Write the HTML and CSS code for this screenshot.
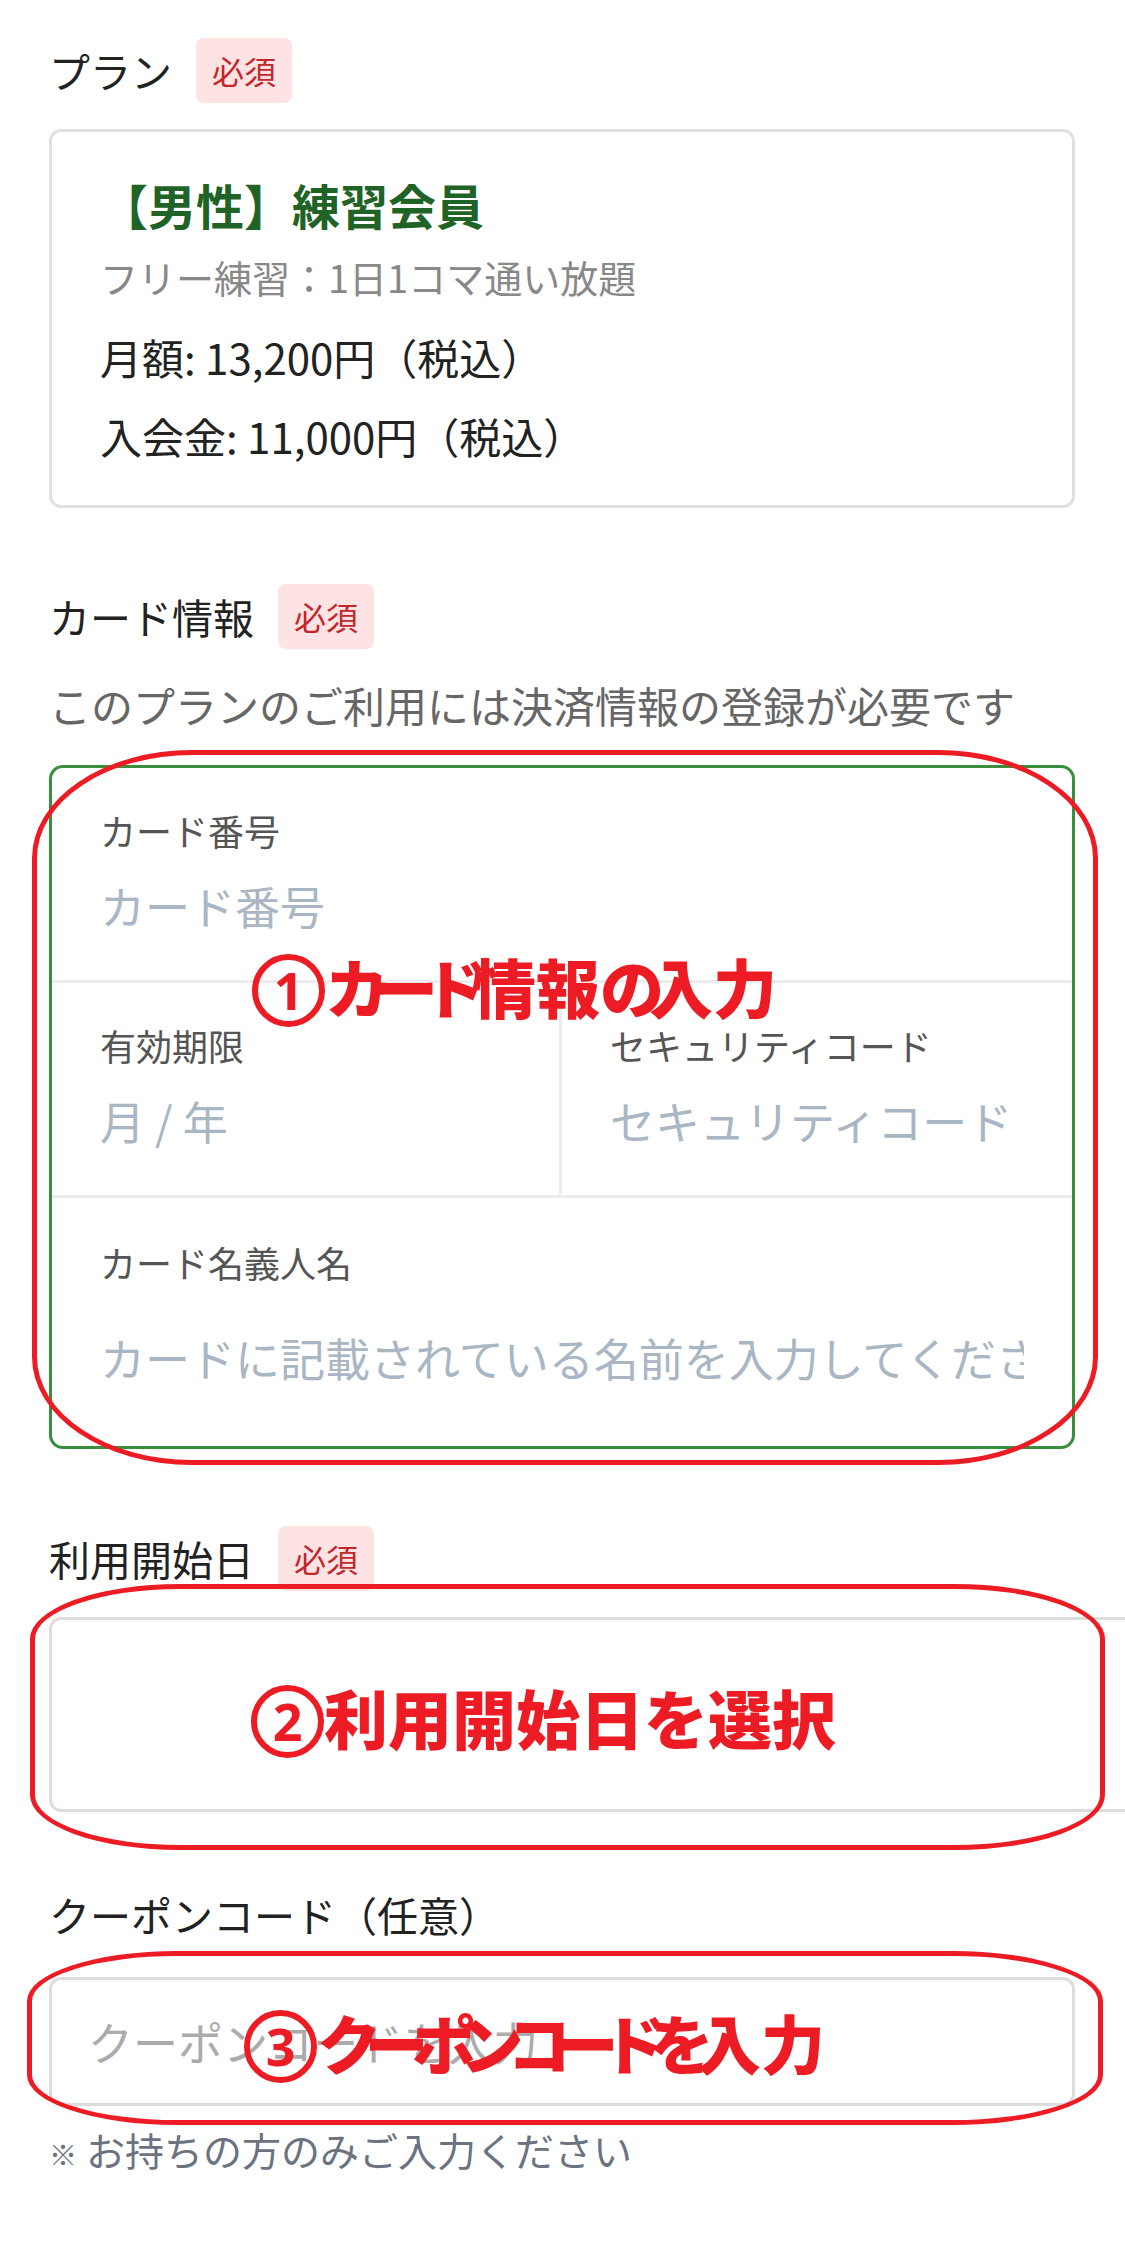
FILE: index.html
```html
<!DOCTYPE html>
<html lang="ja">
<head>
<meta charset="utf-8">
<title>お申し込み</title>
<link rel="stylesheet" href="styles.css">
</head>
<body>
<div class="page">
  <section class="field field-plan">
    <div class="label-row"><span class="label">プラン</span><span class="badge">必須</span></div>
    <div class="plan-card">
      <div class="plan-title">【男性】練習会員</div>
      <div class="plan-sub">フリー練習：1日1コマ通い放題</div>
      <div class="plan-price price-first">月額: 13,200円（税込）</div>
      <div class="plan-price">入会金: 11,000円（税込）</div>
    </div>
  </section>

  <section class="field field-card">
    <div class="label-row"><span class="label">カード情報</span><span class="badge">必須</span></div>
    <p class="desc">このプランのご利用には決済情報の登録が必要です</p>
    <div class="card-box">
      <div class="cf">
        <div class="cf-label">カード番号</div>
        <div class="cf-input">カード番号</div>
      </div>
      <div class="cf-row">
        <div class="cf cf-left">
          <div class="cf-label">有効期限</div>
          <div class="cf-input">月 / 年</div>
        </div>
        <div class="cf">
          <div class="cf-label">セキュリティコード</div>
          <div class="cf-input">セキュリティコード</div>
        </div>
      </div>
      <div class="cf cf-name">
        <div class="cf-label">カード名義人名</div>
        <div class="cf-input">カードに記載されている名前を入力してください</div>
      </div>
    </div>
  </section>

  <section class="field field-date">
    <div class="label-row"><span class="label">利用開始日</span><span class="badge">必須</span></div>
    <div class="date-box"></div>
  </section>

  <section class="field field-coupon">
    <div class="label-row"><span class="label">クーポンコード（任意）</span></div>
    <div class="coupon-box"><span class="coupon-ph">クーポンコードを入力</span></div>
    <p class="note"><span class="kome">※</span>お持ちの方のみご入力ください</p>
  </section>

  <div class="mark mark-1"></div>
  <div class="mark-text mt-1"><span class="num">1</span><span class="mt-words"><span class="kana k1">カード</span>情報<span class="kana k1">の</span>入力</span></div>
  <div class="mark mark-2"></div>
  <div class="mark-text mt-2"><span class="num">2</span><span class="mt-words">利用開始日を選択</span></div>
  <div class="mark mark-3"></div>
  <div class="mark-text mt-3"><span class="num">3</span><span class="mt-words"><span class="kana k3">クーポンコードを</span>入力</span></div>
</div>
</body>
</html>
```
FILE: styles.css
```css
html, body {
  margin: 0;
  padding: 0;
  background: #ffffff;
}
body {
  font-family: "Noto Sans CJK JP", "Noto Sans", sans-serif;
  color: #222222;
}
.page {
  position: relative;
  overflow: hidden;
  width: 1125px;
  height: 2253px;
  box-sizing: border-box;
  padding: 38px 50px 0 49px;
}
.field-card { margin-top: 76px; }
.field-date { margin-top: 77px; }
.field-coupon { margin-top: 70px; }

.label-row {
  display: flex;
  align-items: center;
  gap: 24px;
  height: 65px;
}
.label {
  font-size: 41px;
  line-height: 65px;
  color: #222222;
}
.badge {
  display: inline-flex;
  align-items: center;
  justify-content: center;
  width: 96px;
  height: 65px;
  border-radius: 8px;
  background: #fde3e3;
  color: #c4262b;
  font-size: 32px;
  line-height: 65px;
}

.plan-card {
  margin-top: 26px;
  border: 3px solid #e1e1e1;
  border-radius: 12px;
  padding: 42px 48px 30px;
}
.plan-title {
  font-size: 48px;
  line-height: 60px;
  font-weight: 700;
  color: #1f6326;
}
.plan-sub {
  margin-top: 16px;
  font-size: 38px;
  line-height: 54px;
  color: #888888;
}
.plan-price {
  font-size: 42px;
  line-height: 79px;
  color: #222222;
}
.price-first { margin-top: 13px; }

.desc {
  margin: 26px 0 0;
  font-size: 42px;
  line-height: 60px;
  color: #666666;
  white-space: nowrap;
}

.card-box {
  margin-top: 30px;
  border: 3px solid #3a8e3d;
  border-radius: 14px;
  overflow: hidden;
}
.cf {
  padding: 38px 48px 44px;
  border-bottom: 3px solid #ececec;
}
.cf-row {
  display: grid;
  grid-template-columns: 1fr 1fr;
}
.cf-left { border-right: 3px solid #ececec; }
.cf-label {
  font-size: 36px;
  line-height: 48px;
  color: #555555;
  white-space: nowrap;
}
.cf-input {
  margin-top: 22px;
  font-size: 45px;
  line-height: 60px;
  color: #a9b6c4;
  white-space: nowrap;
  overflow: hidden;
}
.cf-name {
  border-bottom: none;
  padding: 40px 48px 58px;
}
.cf-name .cf-input { margin-top: 42px; }

.date-box {
  margin-top: 26px;
  width: 1120px;
  height: 195px;
  box-sizing: border-box;
  border: 3px solid #dddddd;
  border-radius: 12px;
}

.coupon-box {
  margin-top: 30px;
  height: 129px;
  box-sizing: border-box;
  border: 3px solid #dddddd;
  border-radius: 12px;
  display: flex;
  align-items: center;
  padding-left: 36px;
}
.coupon-ph {
  font-size: 45px;
  line-height: 60px;
  color: #ababab;
}
.note {
  margin: 17px 0 0;
  font-size: 39px;
  line-height: 52px;
  color: #6b7280;
  white-space: nowrap;
}
.kome {
  font-size: 28px;
  margin-right: 9px;
}

/* red hand-drawn annotations */
.mark {
  position: absolute;
  box-sizing: border-box;
  border: 5px solid #ed1c24;
}
.mark-1 {
  left: 32px;
  top: 750px;
  width: 1066px;
  height: 715px;
  border-radius: 160px / 108px;
}
.mark-2 {
  left: 30px;
  top: 1584px;
  width: 1075px;
  height: 266px;
  border-radius: 150px / 55px;
}
.mark-3 {
  left: 27px;
  top: 1951px;
  width: 1076px;
  height: 174px;
  border-radius: 150px / 50px;
}
.mark-text {
  position: absolute;
  display: flex;
  align-items: center;
  height: 80px;
  color: #ed1c24;
  font-weight: 900;
  white-space: nowrap;
}
.mt-1 { left: 252px; top: 950px; }
.mt-2 { left: 251px; top: 1681px; }
.mt-3 { left: 244px; top: 2006px; }
.num {
  display: inline-flex;
  align-items: center;
  justify-content: center;
  box-sizing: border-box;
  width: 73px;
  height: 73px;
  border: 6px solid #ed1c24;
  border-radius: 50%;
  font-family: "Noto Sans", "Liberation Sans", sans-serif;
  font-size: 52px;
  line-height: 1;
  font-weight: 700;
}
.mt-words {
  font-size: 64px;
  line-height: 80px;
  padding-bottom: 10px;
}
.k1 { letter-spacing: -15px; }
.k3 { letter-spacing: -16.5px; }
```
